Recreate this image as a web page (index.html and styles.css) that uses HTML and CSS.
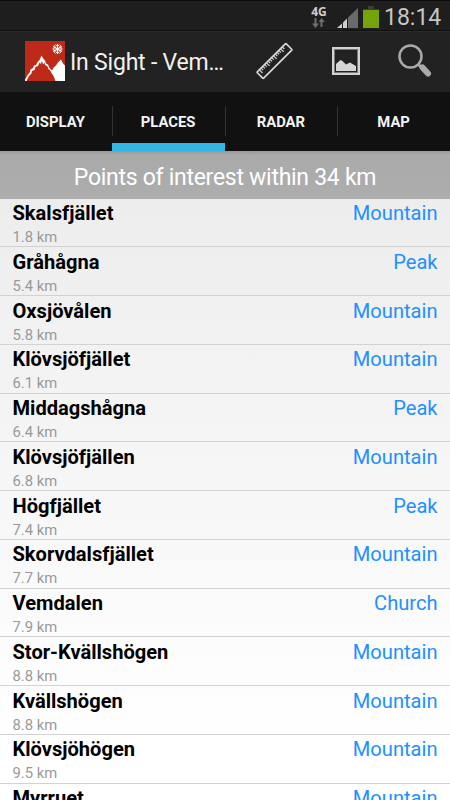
FILE: index.html
```html
<!DOCTYPE html>
<html lang="en">
<head>
    <meta charset="UTF-8">
    <meta name="viewport" content="width=device-width, initial-scale=1.0">
    <title>In Sight - Vemdalen</title>
    <link rel="stylesheet" href="styles.css">
</head>
<body>

    <div class="status-bar">
        <div class="network">
            <span>4G</span>
            <svg width="14" height="10" viewBox="0 0 14 10" fill="#6e6e6e">
                <path d="M2.5 0h2v5.5H7L3.5 10 0 5.5h2.5z"/>
                <path d="M8.5 9h2V4H13L9.500 0 6.500 4h2z"/>
            </svg>
        </div>
        <svg class="signal" width="21" height="20" viewBox="0 0 21 20">
            <path d="M0 20L5 15.500V20zM6 20v-5.500L10 10.500V20H6z" fill="#d0d0d0"/>
            <path d="M11 20V9.500L21 0v20z" fill="#6a6a6a"/>
        </svg>
        <svg class="battery" width="16" height="22" viewBox="0 0 16 22">
            <path d="M5 0h6v3h5v2H0V3h5z" fill="#3c3c3c"/>
            <path d="M0 4h16v18H0z" fill="#74a40a"/>
        </svg>
        <span class="clock">18:14</span>
    </div>

    <div class="action-bar">
        <svg class="app-icon" width="40" height="40" viewBox="0 0 40 40">
            <rect width="40" height="40" fill="#be2a18"/>
            <path d="M0 40V38.500L3 33.500 5 31 5.500 28.500 8 27 9 24.500 11 24 13 20.500 14.500 19 16.500 14.500 18.500 18 20 19.500 21 22.500 23 23.500 24.500 27 27 29.500 29 26 31 24.500 33 21.500 36 18.500 38 22.500 40 24.500V40z" fill="#fff"/>
            <path d="M1.500 40L2.500 38 4 35 6.500 32.500 7 30 9.500 29 10.500 26 13 25 14.500 21.500 15.500 23 17 20 18 23.500 19.500 21.500 20 24 22.500 25.500 23.500 28 25.500 30 26.500 32 28.500 35 30.500 40z" fill="#be2a18"/>
            <g transform="translate(32.500 8)" stroke="#fff" stroke-width="1.200" fill="none">
                <path d="M0-5V5M-4.300-2.500l8.600 5M-4.300 2.500l8.600-5"/>
                <path d="M-2-4.500L0-2.500 2-4.500M-2 4.500L0 2.500 2 4.500M-4.800-0.500L-2.200-1.200-3-3.900M4.800-0.500L2.200-1.200 3-3.900M-4.800 0.500L-2.200 1.200-3 3.900M4.800 0.500L2.200 1.200 3 3.900" stroke-width="0.900"/>
            </g>
        </svg>
        <h1>In Sight - Vem…</h1>
        <div class="actions">
            <svg width="38" height="38" viewBox="0 0 38 38" fill="none" stroke="#d6d6d6">
                <g transform="translate(18.500 19) rotate(-45)">
                    <rect x="-20.500" y="-4.500" width="41" height="9" rx="1" stroke-width="1.700"/>
                    <path d="M-17-4v4M-14.500-4v2.500M-12-4v2.500M-9.500-4v2.500M-7-4v4M-4.500-4v2.500M-2-4v2.500M0.500-4v2.500M3-4v4M5.500-4v2.500M8-4v2.500M10.500-4v2.500M13-4v4M15.500-4v2.500" stroke-width="1.200"/>
                </g>
            </svg>
            <svg width="28" height="28" viewBox="0 0 28 28">
                <rect x="1" y="1" width="26" height="26" fill="none" stroke="#d2d2d2" stroke-width="2"/>
                <rect x="2.500" y="2.500" width="23" height="23" fill="none" stroke="#777" stroke-width="1"/>
                <path d="M4 24v-7l4.500-4 2 1 3.500 3.500 4-2 2.500 1.500 3.500 2V24z" fill="#d6d6d6"/>
            </svg>
            <svg width="34" height="34" viewBox="0 0 34 34" fill="none" stroke="#aaa">
                <path d="M20 20l4 4" stroke-width="3"/>
                <path d="M24.500 23.500l5.500 6" stroke-width="6" stroke-linecap="round"/>
                <circle cx="12.500" cy="12.500" r="11" stroke-width="2.500"/>
            </svg>
        </div>
    </div>

    <div class="tabs">
        <div class="tab">DISPLAY</div>
        <div class="tab active">PLACES</div>
        <div class="tab">RADAR</div>
        <div class="tab">MAP</div>
    </div>

    <div class="list-header">Points of interest within 34 km</div>

    <div class="places">
        <div class="place"><div class="name">Skalsfjället</div><div class="type">Mountain</div><div class="distance">1.8 km</div></div>
        <div class="place"><div class="name">Gråhågna</div><div class="type">Peak</div><div class="distance">5.4 km</div></div>
        <div class="place"><div class="name">Oxsjövålen</div><div class="type">Mountain</div><div class="distance">5.8 km</div></div>
        <div class="place"><div class="name">Klövsjöfjället</div><div class="type">Mountain</div><div class="distance">6.1 km</div></div>
        <div class="place"><div class="name">Middagshågna</div><div class="type">Peak</div><div class="distance">6.4 km</div></div>
        <div class="place"><div class="name">Klövsjöfjällen</div><div class="type">Mountain</div><div class="distance">6.8 km</div></div>
        <div class="place"><div class="name">Högfjället</div><div class="type">Peak</div><div class="distance">7.4 km</div></div>
        <div class="place"><div class="name">Skorvdalsfjället</div><div class="type">Mountain</div><div class="distance">7.7 km</div></div>
        <div class="place"><div class="name">Vemdalen</div><div class="type">Church</div><div class="distance">7.9 km</div></div>
        <div class="place"><div class="name">Stor-Kvällshögen</div><div class="type">Mountain</div><div class="distance">8.8 km</div></div>
        <div class="place"><div class="name">Kvällshögen</div><div class="type">Mountain</div><div class="distance">8.8 km</div></div>
        <div class="place"><div class="name">Klövsjöhögen</div><div class="type">Mountain</div><div class="distance">9.5 km</div></div>
        <div class="place"><div class="name">Myrruet</div><div class="type">Mountain</div></div>
    </div>

</body>
</html>
```
FILE: styles.css
```css
* { box-sizing: border-box; }

body {
    margin: 0;
    height: 800px;
    display: flex;
    flex-direction: column;
    overflow: hidden;
    background-color: #fff;
    font-family: Roboto, "Liberation Sans", sans-serif;
}

svg {
    display: block;
    flex-shrink: 0;
}

.status-bar {
    height: 31px;
    flex-shrink: 0;
    display: flex;
    justify-content: flex-end;
    padding-right: 10px;
    background-color: #1e1e1e;
    border-top: 1px solid #0c0c0c;
    border-bottom: 1px solid #111;
}

.network {
    width: 18px;
    padding-top: 5px;
    display: flex;
    flex-direction: column;
    align-items: center;
    color: #cfcfcf;
    font: bold 12px/12px "Open Sans", sans-serif;
}

.signal { margin: 7px 0 0 9px; }

.battery { margin: 5px 0 0 5px; }

.clock {
    width: 56px;
    margin-left: 5px;
    color: #c6c6c6;
    font-size: 23px;
    line-height: 33px;
    text-align: right;
}

.action-bar {
    height: 61px;
    flex-shrink: 0;
    display: flex;
    align-items: center;
    padding: 0 18px 2px 25px;
    background-color: #222;
    border-top: 1px solid #2b2b2b;
}

h1 {
    margin: 2px 0 0 5px;
    width: 186px;
    color: #f0f0f0;
    font-size: 23px;
    font-weight: normal;
    letter-spacing: -0.2px;
    white-space: nowrap;
}

.actions {
    display: flex;
    align-items: center;
    gap: 38px;
}

.tabs {
    height: 59px;
    flex-shrink: 0;
    display: grid;
    grid-template-columns: repeat(4, 1fr);
    grid-template-rows: 59px;
    margin-left: -1px;
    background-color: #111;
}

.tab {
    position: relative;
    color: #f4f4f4;
    font-size: 14.8px;
    font-weight: bold;
    line-height: 60px;
    text-align: center;
}

.tab.active { border-bottom: 8px solid #33b5e5; }

/* divider between the tabs */
.tab + .tab::before {
    content: "";
    position: absolute;
    left: 0;
    top: 14px;
    width: 1px;
    height: 30px;
    background-color: #333;
}

.list-header {
    height: 47.5px;
    flex-shrink: 0;
    color: #fff;
    font-size: 23px;
    letter-spacing: -0.28px;
    line-height: 54px;
    text-align: center;
    background: linear-gradient(#999 0, #aaa 4px, #adadad 100%);
}

.places {
    flex: 1;
    min-height: 0;
    overflow: hidden;
    background: linear-gradient(#ededed, #fff 90%);
}

.place {
    height: 48.75px;
    display: grid;
    grid-template-columns: 1fr auto;
    grid-template-rows: 28px 19px;
    padding: 0.6px 12.5px 0;
    border-bottom: 1px solid #d2d2d2;
}

.name {
    font-size: 20.1px;
    font-weight: bold;
    line-height: 28px;
}

.type {
    color: #1e90ff;
    font-size: 20.1px;
    line-height: 28px;
}

.distance {
    color: #999;
    font-size: 14.8px;
    line-height: 20px;
}
```
